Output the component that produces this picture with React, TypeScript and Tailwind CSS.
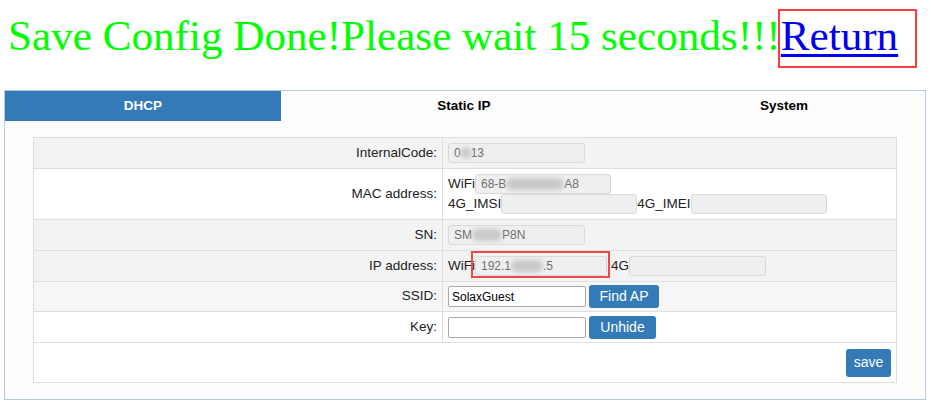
import React from 'react';

const field =
  'inline-flex items-center h-[20px] rounded-[3px] border border-[#d9d9d9] bg-[#efefef] px-[5px] text-[12px] text-[#6f6f6f] align-middle overflow-hidden whitespace-nowrap';

function Blur({ w }: { w: number }) {
  return (
    <span
      className="inline-block h-[12px] rounded-full bg-[#c9c9c9] blur-[2px]"
      style={{ width: w }}
    />
  );
}

function Label({ children }: { children: React.ReactNode }) {
  return (
    <td className="w-[409px] border-r border-[#dedede] pr-[5px] text-right align-middle">
      {children}
    </td>
  );
}

function BlueButton({ children, className = '' }: { children: React.ReactNode; className?: string }) {
  return (
    <button
      className={`rounded-[3px] bg-[#337ab7] text-white text-[14px] align-middle ${className}`}
    >
      {children}
    </button>
  );
}

export default function App() {
  return (
    <div className="w-[931px] h-[404px] bg-white overflow-hidden" style={{ fontFamily: '"Liberation Sans", Arial, sans-serif' }}>
      <div className="h-[90px] pl-[8px] pt-[14px] whitespace-nowrap">
        <span
          className="text-[43.15px] leading-[43px] text-[#00ff00]"
          style={{ fontFamily: '"Liberation Serif", "Times New Roman", serif' }}
        >
          Save Config Done!Please wait 15 seconds!!!
          <span className="relative">
            <a href="#" className="text-[#0000ee] underline decoration-[3px] underline-offset-[4px]">
              Return
            </a>
            <span className="absolute left-[-3px] top-[-3px] w-[139px] h-[59px] border-2 border-[#ff3b3b]" />
          </span>
        </span>
      </div>

      <div className="ml-[4px] w-[922px] h-[310px] border border-[#b3cae2] bg-[#fdfdfd]">
        <div className="flex h-[30px] text-[13.5px] font-bold">
          <div className="w-[276px] bg-[#337ab7] text-white flex items-center justify-center">DHCP</div>
          <div className="w-[366px] text-black flex items-center justify-center">Static IP</div>
          <div className="flex-1 text-black flex items-center justify-center pr-[4px]">System</div>
        </div>

        <div className="px-[28px] pt-[16px]">
          <table className="w-[864px] border-collapse border border-[#dedede] text-[13.5px] text-[#222]">
            <tbody>
              <tr className="h-[31px] bg-[#f3f3f3] border-b border-[#dedede]">
                <Label>InternalCode:</Label>
                <td className="pl-[5px]">
                  <span className={`${field} w-[137px]`}>
                    0<Blur w={10} />13
                  </span>
                </td>
              </tr>
              <tr className="h-[51px] bg-white border-b border-[#dedede]">
                <Label>MAC address:</Label>
                <td className="pl-[5px] leading-[20px]">
                  <div className="flex items-center">
                    WiFi
                    <span className={`${field} w-[136px]`}>
                      68-B<Blur w={58} />A8
                    </span>
                  </div>
                  <div className="flex items-center">
                    4G_IMSI
                    <span className={`${field} w-[136px]`} />
                    4G_IMEI
                    <span className={`${field} w-[136px]`} />
                  </div>
                </td>
              </tr>
              <tr className="h-[31px] bg-[#f3f3f3] border-b border-[#dedede]">
                <Label>SN:</Label>
                <td className="pl-[5px]">
                  <span className={`${field} w-[137px]`}>
                    SM<Blur w={30} />P8N
                  </span>
                </td>
              </tr>
              <tr className="h-[31px] bg-[#f3f3f3] border-b border-[#dedede]">
                <Label>IP address:</Label>
                <td className="pl-[5px]">
                  <div className="flex items-center">
                    WiFi
                    <span className="relative inline-flex">
                      <span className={`${field} w-[132px]`}>
                        192.1<Blur w={32} />.5
                      </span>
                      <span className="absolute left-[-4px] top-[-5px] w-[139px] h-[27px] border-2 border-[#f04848]" />
                    </span>
                    <span className="ml-[4px]">4G</span>
                    <span className={`${field} w-[137px]`} />
                  </div>
                </td>
              </tr>
              <tr className="h-[30px] bg-[#f6f6f6] border-b border-[#dedede]">
                <Label>SSID:</Label>
                <td className="pl-[5px]">
                  <div className="flex items-center">
                    <span className="inline-flex items-center h-[21px] w-[138px] rounded-[2px] border border-[#a9a9a9] bg-white px-[3px] text-[12px] text-black">
                      SolaxGuest
                    </span>
                    <BlueButton className="ml-[3px] w-[70px] h-[23px]">Find AP</BlueButton>
                  </div>
                </td>
              </tr>
              <tr className="h-[31px] bg-white border-b border-[#dedede]">
                <Label>Key:</Label>
                <td className="pl-[5px]">
                  <div className="flex items-center">
                    <span className="inline-flex h-[21px] w-[138px] rounded-[2px] border border-[#a9a9a9] bg-white" />
                    <BlueButton className="ml-[3px] w-[67px] h-[23px]">Unhide</BlueButton>
                  </div>
                </td>
              </tr>
              <tr className="h-[40px] bg-white">
                <td colSpan={2} className="pr-[5px] text-right">
                  <BlueButton className="w-[45px] h-[28px]">save</BlueButton>
                </td>
              </tr>
            </tbody>
          </table>
        </div>
      </div>
    </div>
  );
}
